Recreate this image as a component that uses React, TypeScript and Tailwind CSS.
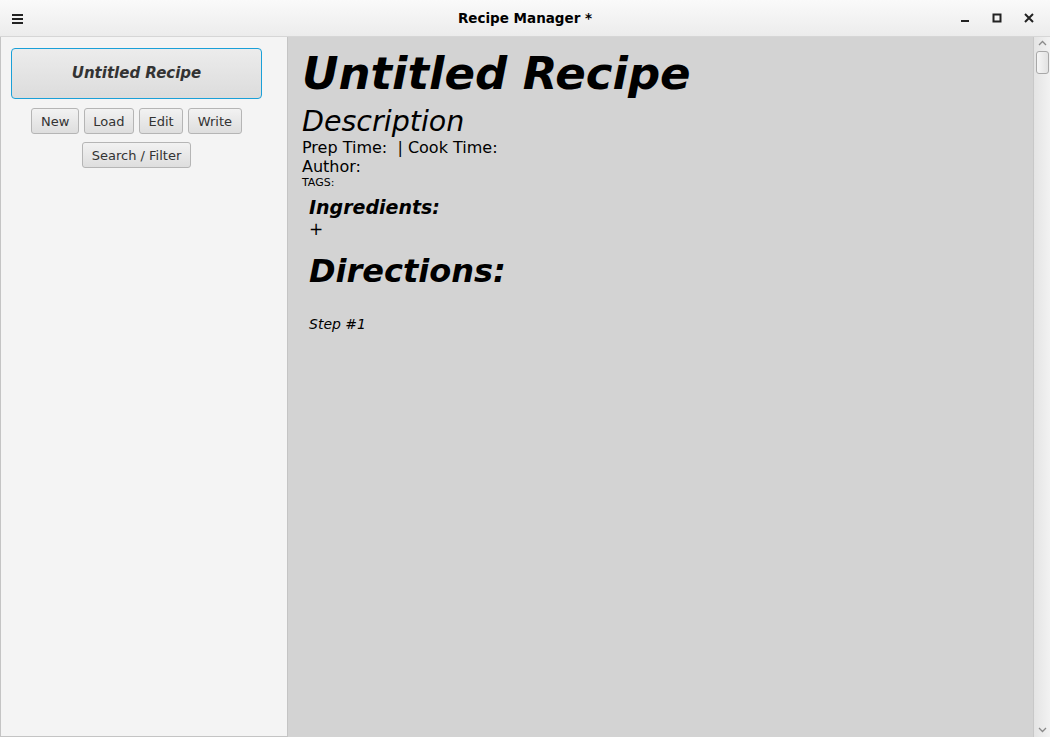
const FONT = "font-['DejaVu_Sans',sans-serif]"

function TitleBar() {
  return (
    <div className="grid h-[37px] shrink-0 grid-cols-[1fr_auto_1fr] items-center border-b border-[#d6d6d6] bg-gradient-to-b from-[#fafafa] to-[#ececec] px-[12px]">
      <svg width="11" height="11" viewBox="0 0 11 11" className="shrink-0">
        <rect x="0" y="1" width="11" height="2" fill="#222" />
        <rect x="0" y="5" width="11" height="2" fill="#222" />
        <rect x="0" y="9" width="11" height="2" fill="#222" />
      </svg>
      <div className="pt-[1px] text-center text-[13.5px] font-bold text-black">Recipe Manager *</div>
      <div className="flex items-center justify-end gap-[22px] pr-[4px]">
        <svg width="10" height="10" viewBox="0 0 10 10">
          <rect x="1" y="7" width="8" height="2" fill="#222" />
        </svg>
        <svg width="10" height="10" viewBox="0 0 10 10">
          <rect x="1.5" y="1.5" width="7" height="7" fill="none" stroke="#222" strokeWidth="2" />
        </svg>
        <svg width="10" height="10" viewBox="0 0 10 10">
          <path d="M1 1 L9 9 M9 1 L1 9" stroke="#222" strokeWidth="2" />
        </svg>
      </div>
    </div>
  )
}

function SmallButton({ label }: { label: string }) {
  return (
    <button className="h-[26px] rounded-[3px] border border-[#b5b5b5] bg-gradient-to-b from-[#f2f2f2] to-[#dedede] px-[8.5px] text-[13px] leading-none text-[#333]">
      {label}
    </button>
  )
}

function Sidebar() {
  return (
    <div className="flex w-[288px] shrink-0 flex-col border-x border-b border-[#c4c4c4] bg-[#f4f4f4] pl-[10px] pt-[11px]">
      <div className="flex w-[251px] flex-col items-center">
        <button className="flex h-[51px] w-[251px] items-center justify-center rounded-[4px] border-[1.5px] border-[#1aa0d8] bg-gradient-to-b from-[#ececec] to-[#dcdcdc] text-[15px] font-bold italic text-[#333]">
          Untitled Recipe
        </button>
        <div className="mt-[9px] flex gap-[5px]">
          <SmallButton label="New" />
          <SmallButton label="Load" />
          <SmallButton label="Edit" />
          <SmallButton label="Write" />
        </div>
        <div className="mt-[8px]">
          <SmallButton label="Search / Filter" />
        </div>
      </div>
    </div>
  )
}

function ScrollBar() {
  return (
    <div className="flex w-[17px] shrink-0 flex-col items-center border-l border-[#c8c8c8] bg-gradient-to-r from-[#e4e4e4] to-[#f2f2f2]">
      <svg width="9" height="6" viewBox="0 0 9 6" className="mt-[3px]">
        <path d="M1 5 L4.5 1.5 L8 5" fill="none" stroke="#8a8a8a" strokeWidth="1.3" />
      </svg>
      <div className="mt-[5px] h-[23px] w-[13px] rounded-[3px] border border-[#a8a8a8] bg-gradient-to-r from-[#f6f6f6] to-[#e2e2e2]" />
      <div className="flex-1" />
      <svg width="9" height="6" viewBox="0 0 9 6" className="mb-[4px]">
        <path d="M1 1 L4.5 4.5 L8 1" fill="none" stroke="#8a8a8a" strokeWidth="1.3" />
      </svg>
    </div>
  )
}

function RecipeView() {
  return (
    <div className="flex flex-1 flex-col bg-[#d3d3d3] pl-[14px] pt-[11px] text-black">
      <h1 className="text-[45px] font-bold italic leading-[52px]">Untitled Recipe</h1>
      <div className="mt-[5px] text-[28.5px] italic leading-[33px]">Description</div>
      <div className="text-[16px] leading-[19px]">Prep Time: &nbsp;| Cook Time:</div>
      <div className="text-[16px] leading-[19px]">Author:</div>
      <div className="text-[11px] leading-[13px]">TAGS:</div>
      <div className="pl-[7px]">
        <div className="mt-[7px] text-[19px] font-bold italic leading-[22px]">Ingredients:</div>
        <div className="mt-[2px] text-[17px] leading-[19px]">+</div>
        <div className="mt-[14px] text-[32px] font-bold italic leading-[37px]">Directions:</div>
        <div className="mt-[26px] text-[14px] italic leading-[17px]">Step #1</div>
      </div>
    </div>
  )
}

export default function App() {
  return (
    <div className={`flex h-[737px] w-[1050px] flex-col overflow-hidden bg-white ${FONT}`}>
      <TitleBar />
      <div className="flex flex-1">
        <Sidebar />
        <RecipeView />
        <ScrollBar />
      </div>
    </div>
  )
}
